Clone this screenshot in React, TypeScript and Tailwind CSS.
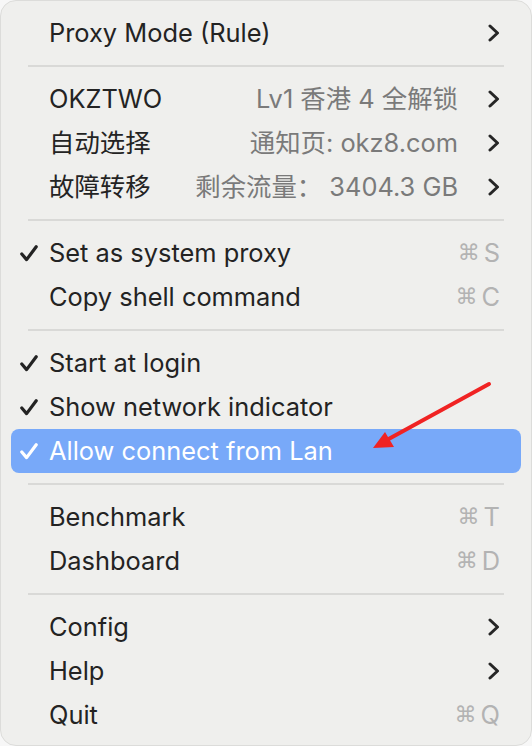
import React from 'react';

type Item =
  | { kind: 'sep' }
  | {
      kind: 'item';
      label: string;
      detail?: string;
      checked?: boolean;
      submenu?: boolean;
      shortcut?: string;
      active?: boolean;
    };

const items: Item[] = [
  { kind: 'item', label: 'Proxy Mode (Rule)', submenu: true },
  { kind: 'sep' },
  { kind: 'item', label: 'OKZTWO', detail: 'Lv1 香港 4 全解锁', submenu: true },
  { kind: 'item', label: '自动选择', detail: '通知页: okz8.com', submenu: true },
  { kind: 'item', label: '故障转移', detail: '剩余流量： 3404.3 GB', submenu: true },
  { kind: 'sep' },
  { kind: 'item', label: 'Set as system proxy', checked: true, shortcut: 'S' },
  { kind: 'item', label: 'Copy shell command', shortcut: 'C' },
  { kind: 'sep' },
  { kind: 'item', label: 'Start at login', checked: true },
  { kind: 'item', label: 'Show network indicator', checked: true },
  { kind: 'item', label: 'Allow connect from Lan', checked: true, active: true },
  { kind: 'sep' },
  { kind: 'item', label: 'Benchmark', shortcut: 'T' },
  { kind: 'item', label: 'Dashboard', shortcut: 'D' },
  { kind: 'sep' },
  { kind: 'item', label: 'Config', submenu: true },
  { kind: 'item', label: 'Help', submenu: true },
  { kind: 'item', label: 'Quit', shortcut: 'Q' },
];

function Check({ color }: { color: string }) {
  return (
    <svg width="18" height="17" viewBox="0 0 18 17" fill="none">
      <path d="M1.8 9 L6.6 14.6 L16.2 1.8" stroke={color} strokeWidth="3.2" strokeLinecap="round" strokeLinejoin="round" />
    </svg>
  );
}

function Chevron() {
  return (
    <svg width="12" height="18" viewBox="0 0 12 18" fill="none">
      <path d="M2 2 L9.5 9 L2 16" stroke="#262626" strokeWidth="3" strokeLinecap="round" strokeLinejoin="round" />
    </svg>
  );
}

function Row({ item }: { item: Extract<Item, { kind: 'item' }> }) {
  const active = item.active;
  return (
    <div
      className={`mx-[10px] h-[44px] flex items-center pr-[21px] rounded-[8px] ${
        active ? 'bg-[#78a9f9] text-white' : 'text-[#232323]'
      }`}
    >
      <div className="w-[38px] pl-[9px] flex items-center">
        {item.checked && <Check color={active ? '#ffffff' : '#232323'} />}
      </div>
      <span className="whitespace-nowrap">{item.label}</span>
      <div className="flex-1" />
      {item.detail && (
        <span className="whitespace-nowrap text-[#7a7a7a] mr-[30px]">{item.detail}</span>
      )}
      {item.submenu && <Chevron />}
      {item.shortcut && (
        <span className="flex items-center text-[#b3b3b3] whitespace-nowrap">
          <span className="text-[22px] mr-[4px] font-['DejaVu_Sans',sans-serif]">⌘</span>
          <span>{item.shortcut}</span>
        </span>
      )}
    </div>
  );
}

export default function App() {
  return (
    <div className="w-[532px] h-[746px] bg-[#f7f7f7]">
      <div className="relative w-[532px] h-[746px] bg-[#efefed] border border-[#dcdcda] rounded-[16px] pt-[10px] font-['Inter','Noto_Sans_CJK_SC',sans-serif] text-[25.4px] leading-none">
        {items.map((it, i) =>
          it.kind === 'sep' ? (
            <div key={i} className="h-[22px] flex items-center px-[27px]">
              <div className="h-[2px] w-full bg-[#d9d9d7]" />
            </div>
          ) : (
            <Row key={i} item={it} />
          )
        )}
        <svg className="absolute left-0 top-0 pointer-events-none" width="532" height="746" viewBox="0 0 532 746">
          <line x1="488" y1="383" x2="384" y2="440" stroke="#f02323" strokeWidth="4" strokeLinecap="round" />
          <polygon points="372,447 384,431 393,446" fill="#f02323" />
        </svg>
      </div>
    </div>
  );
}
